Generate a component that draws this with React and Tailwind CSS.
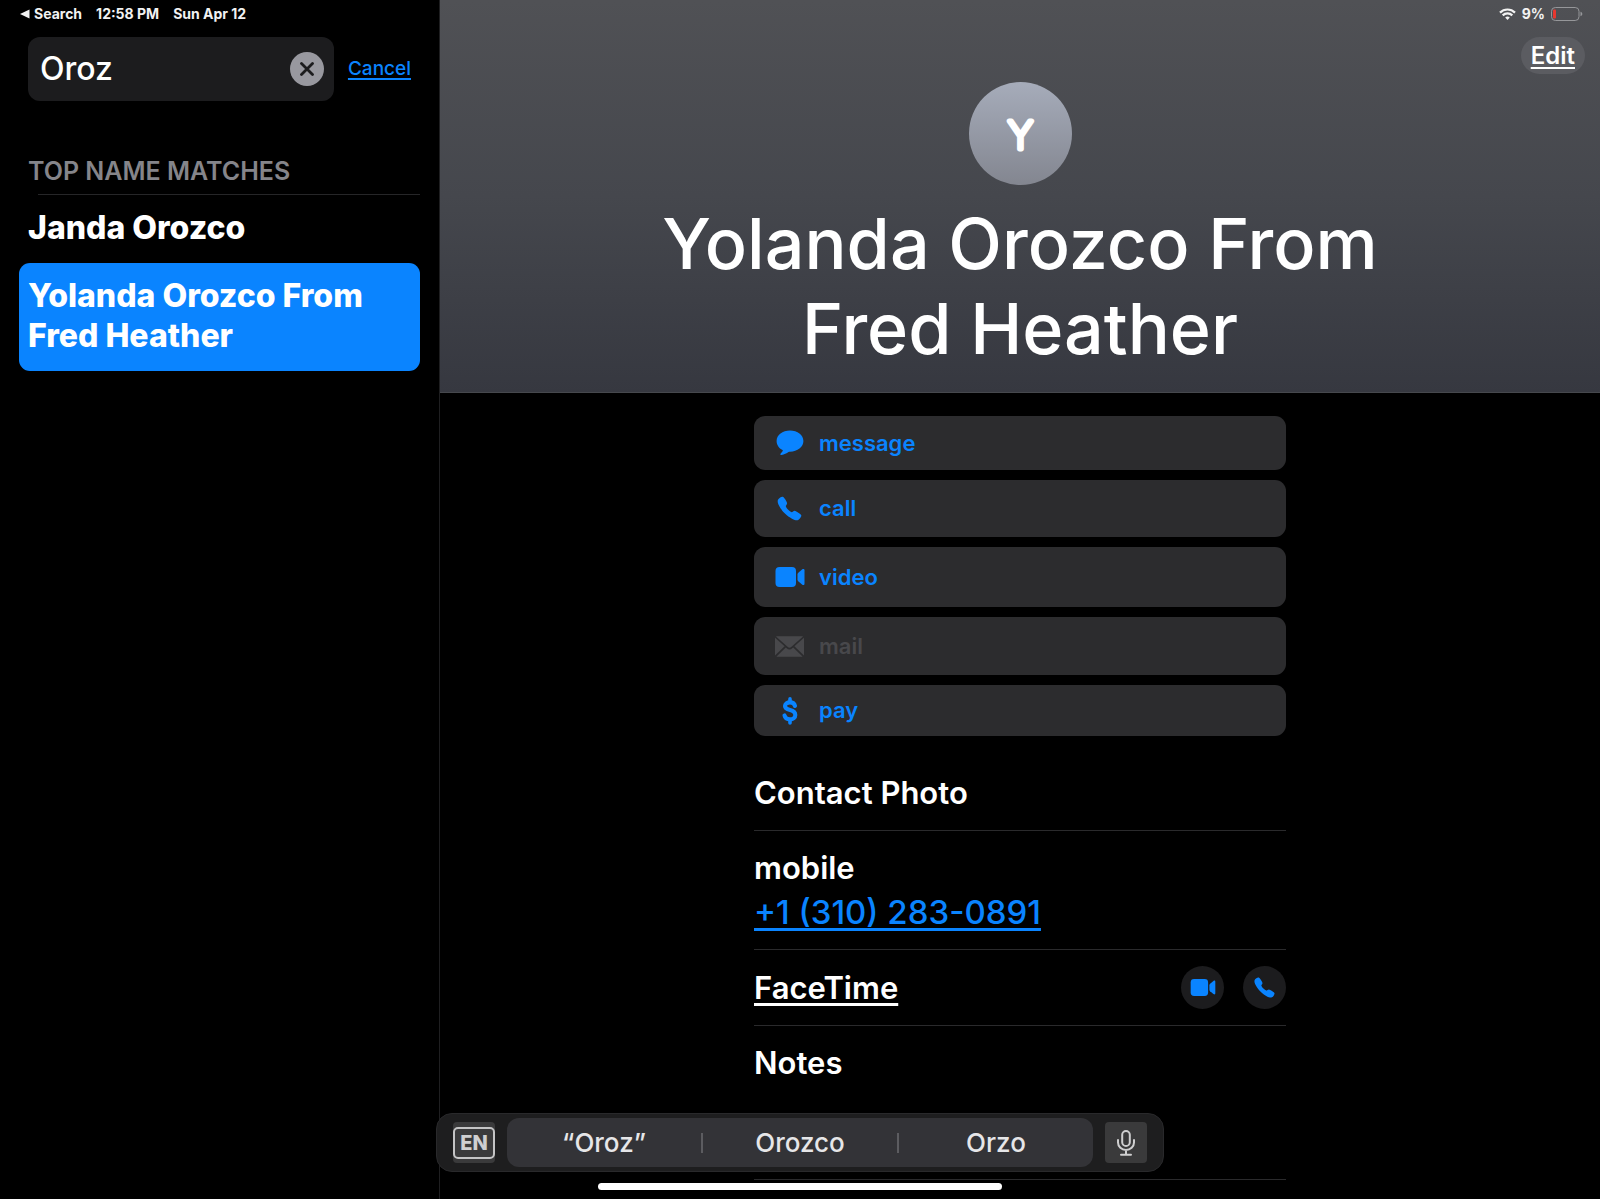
import React, { useState } from "react";
import { IoCall } from "react-icons/io5";

const MessageIcon = ({ className }) => (
  <svg viewBox="0 0 28 26" fill="currentColor" className={className}>
    <path d="M14 0.5C6.500 0.500 0.600 5 0.600 11c0 3.900 2.300 7.200 5.900 9.100.4.200.5.600.2 1-.5.8-1.300 1.600-2 2.300-.7.700-.3 1.700.8 1.600 2.800-.3 5.200-1.500 7-2.900.4-.3.900-.4 1.500-.4 7.500-.1 13.400-4.700 13.400-10.700S21.500 0.500 14 0.500z" />
  </svg>
);

const VideoIcon = ({ className }) => (
  <svg viewBox="0 0 30 20" fill="currentColor" className={className}>
    <rect x="0.500" y="0" width="20.500" height="20" rx="4" />
    <path d="M22.500 7.500c0-.7.300-1.300.8-1.800l4-3.400c1-.8 2.200-.4 2.200.9v13.600c0 1.300-1.200 1.700-2.200.9l-4-3.400c-.5-.5-.8-1.100-.8-1.800z" />
  </svg>
);

const MailIcon = ({ className }) => (
  <svg viewBox="0 0 29 21" fill="currentColor" className={className}>
    <path d="M2 0.300h25c.4 0 .7.100 1 .3L16.200 11.100c-1.100 1-2.300 1-3.400 0L1 0.600c.3-.2.600-.3 1-.3z" />
    <path d="M0 1.800L9.600 10.300 0 19.400z" />
    <path d="M29 1.800v17.600L19.400 10.300z" />
    <path d="M10.800 11.400l.9.800c1.800 1.600 3.800 1.600 5.600 0l.9-.8 9.300 9.100c-.2.100-.4.200-.7.200H2.200c-.3 0-.5-.1-.7-.2z" />
  </svg>
);

const DollarIcon = ({ className }) => (
  <svg
    viewBox="0 0 16 28"
    fill="none"
    stroke="currentColor"
    strokeLinecap="round"
    className={className}
  >
    <path
      d="M13 9C12.500 6.600 10.700 5.400 8 5.400c-3 0-5 1.400-5 3.700 0 2.200 1.500 3.200 5 4 3.900 1 5.300 2.200 5.300 4.800 0 2.900-2.200 4.500-5.300 4.500-3.100 0-5-1.500-5.500-4"
      strokeWidth="4.100"
    />
    <path d="M8 1.900v3M8 23v3" strokeWidth="3.600" />
  </svg>
);

const MicIcon = ({ className }) => (
  <svg
    viewBox="0 0 18 26"
    fill="none"
    stroke="currentColor"
    strokeWidth="2"
    strokeLinecap="round"
    className={className}
  >
    <rect x="5.200" y="1" width="7.600" height="15" rx="3.800" />
    <path d="M1 10v2.500a8 7.500 0 0 0 16 0V10M9 20v4.500M4 24.700h10" />
  </svg>
);

const WifiIcon = ({ className }) => (
  <svg
    viewBox="0 0 17 12"
    fill="none"
    stroke="currentColor"
    strokeWidth="2.200"
    className={className}
  >
    <path d="M1 4.600a10.600 10.600 0 0 1 15 0" />
    <path d="M3.700 7.400a6.800 6.800 0 0 1 9.600 0" />
    <path
      d="M6.200 9.500a3.300 3.300 0 0 1 4.600 0L8.500 11.900z"
      fill="currentColor"
      stroke="none"
    />
  </svg>
);

const BatteryIcon = ({ className }) => (
  <svg viewBox="0 0 32 14" className={className}>
    <rect
      x="0.500"
      y="0.500"
      width="27.500"
      height="13"
      rx="3.800"
      fill="none"
      stroke="#96979a"
    />
    <rect x="2" y="2.500" width="3" height="9" rx="1" fill="#e8372f" />
    <path d="M29.500 4.800c1.200.4 1.800 1.200 1.800 2.200s-.6 1.800-1.800 2.200z" fill="#96979a" />
  </svg>
);

const actions = [
  {
    label: "message",
    height: "min-h-[54px]",
    icon: <MessageIcon className="w-7 h-[26px]" />,
  },
  {
    label: "call",
    height: "min-h-[57px]",
    icon: <IoCall className="size-[27px]" />,
  },
  {
    label: "video",
    height: "min-h-[60px]",
    icon: <VideoIcon className="w-[30px] h-5" />,
  },
  {
    label: "mail",
    height: "min-h-[58px]",
    icon: <MailIcon className="w-[29px] h-[21px]" />,
    disabled: true,
  },
  {
    label: "pay",
    height: "min-h-[51px]",
    icon: <DollarIcon className="w-4 h-7" />,
  },
];

const suggestions = ["“Oroz”", "Orozco", "Orzo"];

const Sidebar = () => {
  const [query, setQuery] = useState("Oroz");

  return (
    <aside className="w-[440px] shrink-0 border-r border-[#1f1f21] bg-black">
      {/* Status bar, left half */}
      <div className="flex h-7 items-center gap-3.5 pl-5 text-sm font-bold text-[#f2f2f2]">
        <button type="button" className="flex items-center gap-1">
          <svg viewBox="0 0 10 10" fill="currentColor" className="w-2.5 h-2.5">
            <path d="M0 5L9.500 0.500v9z" />
          </svg>
          Search
        </button>
        <span>12:58 PM</span>
        <span>Sun Apr 12</span>
      </div>

      <form className="mt-[9px] flex items-center gap-3.5 px-7">
        <div className="flex h-16 min-w-0 flex-1 items-center rounded-xl bg-[#1c1c1e] pl-3 pr-2.5">
          <input
            type="text"
            aria-label="Search contacts"
            value={query}
            onChange={(e) => setQuery(e.target.value)}
            className="min-w-0 flex-1 bg-transparent text-[32px] leading-10 font-medium outline-none"
          />
          <button
            type="button"
            aria-label="Clear text"
            onClick={() => setQuery("")}
            className="flex size-[34px] items-center justify-center rounded-full bg-[#98989f]"
          >
            <svg
              viewBox="0 0 14 14"
              fill="none"
              stroke="#1c1c1e"
              strokeWidth="2.800"
              strokeLinecap="round"
              className="size-3.5"
            >
              <path d="M1.500 1.500l11 11M12.500 1.500l-11 11" />
            </svg>
          </button>
        </div>
        <button
          type="button"
          className="text-[19px] font-medium text-[#0a84ff] underline decoration-2 underline-offset-3"
        >
          Cancel
        </button>
      </form>

      <section className="mt-[51px] px-[19px]">
        <h2 className="px-[9px] pb-1 text-[25px] leading-[38px] font-semibold text-[#85858a]">
          TOP NAME MATCHES
        </h2>
        <ul className="text-[32px] leading-10 font-extrabold">
          <li className="ml-[19px] border-t border-[#262628]" />
          <li>
            <a href="#janda" className="block px-[9px] pt-[13px] pb-[15px]">
              Janda Orozco
            </a>
          </li>
          <li>
            <a
              href="#yolanda"
              aria-current="true"
              className="block rounded-[11px] bg-[#0a84ff] px-[9px] pt-[13px] pb-[15px]"
            >
              Yolanda Orozco From Fred Heather
            </a>
          </li>
        </ul>
      </section>
    </aside>
  );
};

const ContactHeader = () => (
  <header className="flex flex-col items-center border-b border-[#46484d] bg-linear-to-b from-[#505155] via-[#45474d] to-[#363840] pb-[21px]">
    {/* Status bar, right half */}
    <div className="flex h-7 items-center gap-1.5 self-end pr-[17px] text-sm font-bold text-[#f2f2f2]">
      <WifiIcon className="w-[17px] h-3" />
      <span>9%</span>
      <BatteryIcon className="w-8 h-3.5" />
    </div>
    <button
      type="button"
      className="mt-[9px] mr-[15px] flex h-[37px] items-center self-end rounded-full bg-[#5b5c61] px-2.5 text-2xl font-semibold underline decoration-2 underline-offset-3"
    >
      Edit
    </button>
    <svg viewBox="0 0 103 103" className="mt-2 size-[103px]">
      <defs>
        <linearGradient id="avatar" x1="0" y1="0" x2="0" y2="1">
          <stop offset="0" stopColor="#a6acba" />
          <stop offset="1" stopColor="#838690" />
        </linearGradient>
      </defs>
      <circle cx="51.500" cy="51.500" r="51.500" fill="url(#avatar)" />
      <text
        x="51.500"
        y="67"
        textAnchor="middle"
        fill="white"
        stroke="white"
        strokeWidth="5"
        strokeLinejoin="round"
        className="text-[38px] font-extralight"
      >
        Y
      </text>
    </svg>
    <h1 className="mt-4 max-w-[760px] text-center text-[70px] leading-[85px] font-medium">
      Yolanda Orozco From Fred Heather
    </h1>
  </header>
);

const ContactDetails = () => (
  <div className="mx-auto w-full max-w-[532px] pt-[23px]">
    <div className="flex flex-col gap-2.5">
      {actions.map((action) => (
        <button
          key={action.label}
          type="button"
          disabled={action.disabled}
          className={`${action.height} flex items-center gap-3.5 rounded-[11px] bg-[#2c2c2e] pl-5 text-[22px] font-semibold text-[#0a84ff] disabled:text-[#48484b]`}
        >
          <span className="flex w-[31px] justify-center">{action.icon}</span>
          {action.label}
        </button>
      ))}
    </div>

    <div className="mt-5 text-[31px] leading-[42px] font-semibold [&>*]:border-b [&>*]:border-[#2a2a2c] [&>*]:py-4">
      <div>Contact Photo</div>
      <div className="flex flex-col items-start gap-0.5">
        <span>mobile</span>
        <a
          href="tel:+13102830891"
          className="text-[33px] font-medium text-[#0a84ff] underline decoration-3 underline-offset-4"
        >
          +1 (310) 283-0891
        </a>
      </div>
      <div className="flex items-center">
        <a
          href="#facetime"
          className="underline decoration-3 underline-offset-4"
        >
          FaceTime
        </a>
        <div className="ml-auto flex gap-[19px] text-[#0a84ff]">
          <button
            type="button"
            aria-label="FaceTime video"
            className="flex size-[43px] items-center justify-center rounded-full bg-[#1c1c1e]"
          >
            <VideoIcon className="w-[26px] h-[17px]" />
          </button>
          <button
            type="button"
            aria-label="FaceTime audio"
            className="flex size-[43px] items-center justify-center rounded-full bg-[#1c1c1e]"
          >
            <IoCall className="size-[23px]" />
          </button>
        </div>
      </div>
      <div>
        <label htmlFor="notes" className="block">
          Notes
        </label>
        <textarea
          id="notes"
          className="block h-[79px] w-full resize-none bg-transparent outline-none"
        />
      </div>
    </div>
  </div>
);

const KeyboardBar = () => (
  <div className="fixed inset-x-0 bottom-0 flex flex-col items-center pb-[9px]">
    <div className="flex w-full max-w-[728px] items-center gap-3 rounded-2xl border border-[#29292b] bg-[#1e1e1f] px-4 py-1 text-[#e6e6e8]">
      <button
        type="button"
        className="flex h-[41px] items-center rounded-sm bg-[#3a3a3b]"
      >
        <span className="flex h-8 w-[42px] items-center justify-center rounded-[5px] border-2 border-[#c4c4c5] text-xl font-extrabold text-[#cfcfd0]">
          EN
        </span>
      </button>
      <div className="flex h-[49px] flex-1 items-center rounded-xl bg-[#333337]">
        {suggestions.map((word, i) => (
          <React.Fragment key={word}>
            {i > 0 && <span className="h-5 w-0.5 bg-[#5c5c60]" />}
            <button
              type="button"
              className="flex-1 basis-0 text-[26px] font-medium"
            >
              {word}
            </button>
          </React.Fragment>
        ))}
      </div>
      <button
        type="button"
        aria-label="Dictate"
        className="flex h-[41px] w-[42px] items-center justify-center rounded-sm bg-[#3a3a3b] text-[#cfcfd0]"
      >
        <MicIcon className="w-[18px] h-[26px]" />
      </button>
    </div>
    {/* Home indicator */}
    <div className="mt-[11px] h-[7px] w-[404px] rounded-full bg-white" />
  </div>
);

const App = () => {
  return (
    <div className="flex min-h-screen bg-black font-['Inter',sans-serif] text-white">
      <Sidebar />
      <main className="min-w-0 flex-1">
        <ContactHeader />
        <ContactDetails />
      </main>
      <KeyboardBar />
    </div>
  );
};

export default App;
